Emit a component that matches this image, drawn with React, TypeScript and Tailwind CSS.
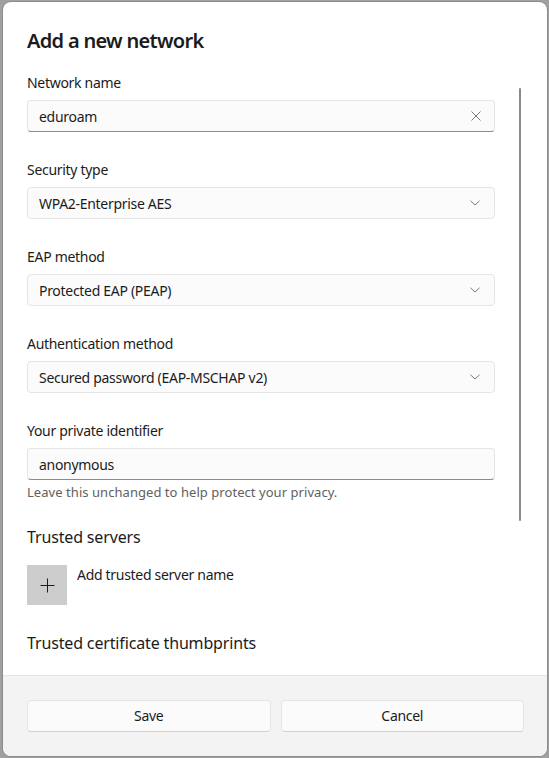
const font = { fontFamily: '"Noto Sans", "Open Sans", sans-serif' };

function ClearIcon() {
  return (
    <svg width="10" height="10" viewBox="0 0 10 10" className="text-[#6b6b6b]">
      <path d="M0.5 0.5 L9.5 9.5 M9.5 0.5 L0.5 9.5" stroke="currentColor" strokeWidth="0.9" fill="none" />
    </svg>
  );
}

function Chevron() {
  return (
    <svg width="10" height="6" viewBox="0 0 10 6" className="text-[#6b6b6b]">
      <path d="M0.5 0.8 L5 5 L9.5 0.8" stroke="currentColor" strokeWidth="0.9" fill="none" />
    </svg>
  );
}

function Field({ label, children }: { label: string; children: React.ReactNode }) {
  return (
    <div className="flex flex-col">
      <div className="h-5 text-[14px] leading-5 tracking-[-0.3px] text-[#1b1b1b]">{label}</div>
      <div className="mt-[7px]">{children}</div>
    </div>
  );
}

function TextBox({ value, clear }: { value: string; clear?: boolean }) {
  return (
    <div className="flex h-8 items-center justify-between rounded-[4px] border border-[#e5e5e5] border-b-[#8a8a8a] bg-[#fbfbfb] pl-[11px] pr-[13px] text-[14px] tracking-[-0.3px] text-[#1b1b1b]">
      <span>{value}</span>
      {clear && <ClearIcon />}
    </div>
  );
}

function Combo({ value }: { value: string }) {
  return (
    <div className="flex h-8 items-center justify-between rounded-[4px] border border-[#e5e5e5] bg-[#fbfbfb] pl-[11px] pr-[14px] text-[14px] tracking-[-0.3px] text-[#1b1b1b]">
      <span>{value}</span>
      <Chevron />
    </div>
  );
}

export default function App() {
  return (
    <div className="h-[758px] w-[549px] overflow-hidden bg-[#a0a0a0] pl-[3px] pt-[2px]" style={font}>
      <div className="flex h-[754px] w-[544px] flex-col overflow-hidden rounded-lg bg-white shadow-[0_0_0_1px_#8c8c8c]">
        {/* Scrolling body */}
        <div className="relative flex-1 overflow-hidden pl-6 pr-[52px]">
          <h1 className="mt-[25px] text-[20px] font-semibold leading-7 tracking-[-0.7px] text-[#1b1b1b]">Add a new network</h1>

          <div className="mt-[18px] flex flex-col gap-[28px]">
            <Field label="Network name">
              <TextBox value="eduroam" clear />
            </Field>
            <Field label="Security type">
              <Combo value="WPA2-Enterprise AES" />
            </Field>
            <Field label="EAP method">
              <Combo value="Protected EAP (PEAP)" />
            </Field>
            <Field label="Authentication method">
              <Combo value="Secured password (EAP-MSCHAP v2)" />
            </Field>
            <div className="flex flex-col">
              <Field label="Your private identifier">
                <TextBox value="anonymous" />
              </Field>
              <div className="mt-[2px] text-[13px] leading-5 tracking-[0.05px] text-[#616161]">
                Leave this unchanged to help protect your privacy.
              </div>
            </div>
          </div>

          <h2 className="mt-[24px] text-[16px] leading-[22px] tracking-[-0.15px] text-[#1b1b1b]">Trusted servers</h2>
          <div className="mt-[17px] flex items-start gap-[10px]">
            <div className="flex h-10 w-10 items-center justify-center bg-[#cccccc]">
              <svg width="15" height="15" viewBox="0 0 15 15" className="text-[#1b1b1b]">
                <path d="M7.5 0.5 V14.5 M0.5 7.5 H14.5" stroke="currentColor" strokeWidth="1" fill="none" />
              </svg>
            </div>
            <span className="text-[14px] leading-5 tracking-[-0.3px] text-[#1b1b1b]">Add trusted server name</span>
          </div>

          <h2 className="mt-[27px] text-[16px] leading-[22px] tracking-[-0.15px] text-[#1b1b1b]">Trusted certificate thumbprints</h2>

          {/* scrollbar */}
          <div className="absolute right-[26px] top-[86px] h-[433px] w-[2px] rounded-full bg-[#8a8a8a]" />
        </div>

        {/* Footer */}
        <div className="flex h-[81px] shrink-0 gap-[10px] border-t border-[#e5e5e5] bg-[#f3f3f3] pl-6 pr-[23px] pt-6">
          <button className="h-8 flex-1 rounded-[4px] border border-[#e5e5e5] border-b-[#d0d0d0] bg-[#fbfbfb] text-[14px] leading-5 tracking-[-0.3px] text-[#1b1b1b]">
            Save
          </button>
          <button className="h-8 flex-1 rounded-[4px] border border-[#e5e5e5] border-b-[#d0d0d0] bg-[#fbfbfb] text-[14px] leading-5 tracking-[-0.3px] text-[#1b1b1b]">
            Cancel
          </button>
        </div>
      </div>
    </div>
  );
}
